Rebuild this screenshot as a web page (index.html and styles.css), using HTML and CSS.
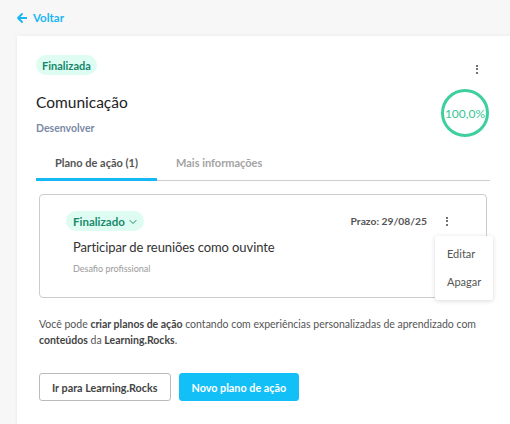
FILE: index.html
```html
<!DOCTYPE html>
<html lang="pt">
<head>
<meta charset="utf-8">
<link rel="stylesheet" href="styles.css">
</head>
<body>
<div class="page">
  <a class="back" href="#">
    <svg width="10" height="10" viewBox="0 0 10 10"><path d="M5 1 L1 5 L5 9 M1 5 H9.5" fill="none" stroke="currentColor" stroke-width="1.8" stroke-linecap="round" stroke-linejoin="round"/></svg>
    <span>Voltar</span>
  </a>
  <div class="card">
    <div class="head-row">
      <span class="badge">Finalizada</span>
      <button class="kebab" aria-label="menu"><span></span><span></span><span></span></button>
    </div>
    <div class="title-row">
      <div class="titles">
        <h1 class="title">Comunicação</h1>
        <div class="subtitle">Desenvolver</div>
      </div>
      <div class="progress">100,0%</div>
    </div>
    <div class="tabs">
      <div class="tab active">Plano de ação (1)</div>
      <div class="tab">Mais informações</div>
    </div>
    <div class="plan">
      <div class="plan-top">
        <span class="badge badge-sm">Finalizado
          <svg width="8" height="6" viewBox="0 0 8 6"><path d="M1 1.5 L4 4.5 L7 1.5" fill="none" stroke="currentColor" stroke-width="1" stroke-linecap="round"/></svg>
        </span>
        <div class="plan-right">
          <span class="deadline">Prazo: 29/08/25</span>
          <div class="menu-wrap">
            <button class="kebab kebab-sm" aria-label="menu"><span></span><span></span><span></span></button>
            <div class="menu">
              <div class="menu-item">Editar</div>
              <div class="menu-item">Apagar</div>
            </div>
          </div>
        </div>
      </div>
      <div class="plan-title">Participar de reuniões como ouvinte</div>
      <div class="plan-type">Desafio profissional</div>
    </div>
    <p class="info">Você pode <b>criar planos de ação</b> contando com experiências personalizadas de aprendizado com <b>conteúdos</b> da <b>Learning.Rocks</b>.</p>
    <div class="actions">
      <button class="btn btn-outline">Ir para Learning.Rocks</button>
      <button class="btn btn-primary">Novo plano de ação</button>
    </div>
  </div>
</div>
</body>
</html>
```
FILE: styles.css
```css
* { box-sizing: border-box; }
html, body { margin: 0; padding: 0; }
body {
  background: #f7f7f7;
  font-family: Lato, "Open Sans", sans-serif;
  color: #333;
  overflow: hidden;
  width: 510px;
  height: 424px;
}
.page {
  padding: 11px 0 0 17px;
}
.back {
  display: flex;
  align-items: center;
  gap: 6px;
  color: #17b6f4;
  text-decoration: none;
  font-weight: 700;
  font-size: 11.5px;
  height: 13px;
}
.back svg { display: block; }
.card {
  margin-top: 12px;
  width: 520px;
  background: #fff;
  box-shadow: 0 0 4px rgba(0,0,0,0.06);
  padding: 19px 47px 30px 19px;
}
.head-row {
  display: flex;
  justify-content: space-between;
  align-items: center;
  height: 20px;
}
.badge {
  display: inline-flex;
  align-items: center;
  gap: 4px;
  height: 20px;
  padding: 0 6px;
  border-radius: 10px;
  background: #dffcf3;
  color: #13876a;
  font-weight: 700;
  font-size: 11px;
}
.kebab {
  border: 0;
  background: transparent;
  width: 26px;
  height: 20px;
  padding: 0;
  margin-top: 8px;
  display: flex;
  flex-direction: column;
  align-items: center;
  justify-content: center;
  gap: 1.5px;
  cursor: pointer;
}
.kebab span {
  display: block;
  width: 2px;
  height: 2px;
  background: #444;
  border-radius: 1px;
}
.title-row {
  display: flex;
  justify-content: space-between;
  align-items: center;
  margin-top: 14px;
}
.title {
  margin: 0;
  font-weight: 400;
  font-size: 15.5px;
  color: #222;
  line-height: 20px;
}
.subtitle {
  margin-top: 10px;
  font-size: 10.5px;
  font-weight: 700;
  color: #7b8aa6;
}
.progress {
  width: 48px;
  height: 48px;
  margin-right: 1px;
  border: 3px solid #3fcf9f;
  border-radius: 50%;
  display: flex;
  align-items: center;
  justify-content: center;
  color: #36c597;
  font-size: 12px;
  font-weight: 400;
}
.tabs {
  margin-top: 11px;
  display: flex;
  border-bottom: 1px solid #cfcfcf;
}
.tab {
  padding: 8px 19px 0;
  height: 32px;
  font-size: 11px;
  font-weight: 700;
  color: #a3a3a3;
}
.tab.active {
  color: #555;
  border-bottom: 3px solid #17b6f4;
  margin-bottom: -1px;
  height: 33px;
}
.plan {
  margin: 13px 3px 0;
  border: 1px solid #cccccc;
  border-radius: 4px;
  padding: 16px 26px 23px 26px;
}
.plan-top {
  display: flex;
  justify-content: space-between;
  align-items: center;
}
.badge-sm {
  font-size: 11.5px;
  padding: 0 7px;
  color: #178a6b;
}
.badge-sm svg { margin-top: 1px; }
.plan-right {
  display: flex;
  align-items: center;
  gap: 7px;
}
.deadline {
  font-size: 10.3px;
  font-weight: 700;
  color: #555;
}
.menu-wrap { position: relative; }
.kebab-sm { margin-top: 0; }
.menu {
  position: absolute;
  top: 25px;
  left: 1px;
  width: 58px;
  background: #fff;
  border-radius: 3px;
  box-shadow: 0 1px 5px rgba(0,0,0,0.15);
  padding: 8px 0 0;
  z-index: 2;
}
.menu-item {
  padding: 0 12px;
  height: 28px;
  line-height: 20px;
  font-size: 11px;
  color: #555;
}
.plan-title {
  margin-top: 7px;
  padding-left: 7px;
  font-size: 13px;
  letter-spacing: -0.1px;
  color: #333;
  line-height: 18px;
}
.plan-type {
  margin-top: 7px;
  padding-left: 7px;
  font-size: 9px;
  color: #9a9a9a;
}
.info {
  margin: 18px 3px 0;
  font-size: 10.5px;
  line-height: 16px;
  color: #555;
}
.info b { color: #444; font-weight: 700; }
.actions {
  display: flex;
  gap: 8px;
  margin: 25px 3px 0;
}
.btn {
  height: 28px;
  border-radius: 3px;
  font-family: inherit;
  font-size: 10.8px;
  font-weight: 700;
  padding: 0 12px;
  cursor: pointer;
}
.btn-outline {
  background: #fff;
  border: 1px solid #bbb;
  color: #444;
}
.btn-primary {
  background: #12bff6;
  border: 1px solid #12bff6;
  color: #fff;
}
```
